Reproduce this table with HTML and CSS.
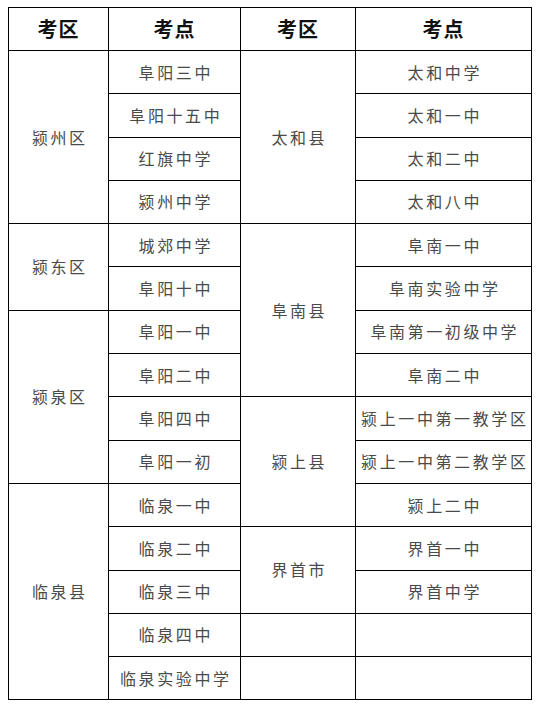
FILE: index.html
```html
<!DOCTYPE html>
<html lang="zh">
<head>
<meta charset="utf-8">
<link rel="stylesheet" href="styles.css">
</head>
<body>
<table class="grid">
  <colgroup>
    <col class="c1"><col class="c2"><col class="c3"><col class="c4">
  </colgroup>
  <thead>
    <tr><th>考区</th><th>考点</th><th>考区</th><th>考点</th></tr>
  </thead>
  <tbody>
    <tr><td rowspan="4">颍州区</td><td>阜阳三中</td><td rowspan="4">太和县</td><td>太和中学</td></tr>
    <tr><td>阜阳十五中</td><td>太和一中</td></tr>
    <tr><td>红旗中学</td><td>太和二中</td></tr>
    <tr><td>颍州中学</td><td>太和八中</td></tr>
    <tr><td rowspan="2">颍东区</td><td>城郊中学</td><td rowspan="4">阜南县</td><td>阜南一中</td></tr>
    <tr><td>阜阳十中</td><td>阜南实验中学</td></tr>
    <tr><td rowspan="4">颍泉区</td><td>阜阳一中</td><td>阜南第一初级中学</td></tr>
    <tr><td>阜阳二中</td><td>阜南二中</td></tr>
    <tr><td>阜阳四中</td><td rowspan="3">颍上县</td><td>颍上一中第一教学区</td></tr>
    <tr><td>阜阳一初</td><td>颍上一中第二教学区</td></tr>
    <tr><td rowspan="5">临泉县</td><td>临泉一中</td><td>颍上二中</td></tr>
    <tr><td>临泉二中</td><td rowspan="2">界首市</td><td>界首一中</td></tr>
    <tr><td>临泉三中</td><td>界首中学</td></tr>
    <tr><td>临泉四中</td><td></td><td></td></tr>
    <tr><td>临泉实验中学</td><td></td><td></td></tr>
  </tbody>
</table>
</body>
</html>
```

FILE: styles.css
```css
html, body {
  margin: 0;
  padding: 0;
  background: #fff;
}
body {
  padding: 7px 0 0 8px;
  font-family: "Noto Sans CJK SC", "Noto Sans", sans-serif;
}
.grid {
  border-collapse: collapse;
  table-layout: fixed;
  width: 523px;
}
.c1 { width: 100px; }
.c2 { width: 132px; }
.c3 { width: 115px; }
.c4 { width: 176px; }
.grid th,
.grid td {
  border: 1px solid #000;
  padding: 0;
  text-align: center;
  vertical-align: middle;
  white-space: nowrap;
  line-height: 1.2;
}
.grid th {
  height: 42px;
  font-size: 20px;
  font-weight: bold;
  color: #111;
  letter-spacing: 1px;
}
.grid td {
  height: 42.3px;
  font-size: 16px;
  font-weight: 400;
  color: #4a4a4a;
  letter-spacing: 2.6px;
  text-indent: 2.6px;
}
```
